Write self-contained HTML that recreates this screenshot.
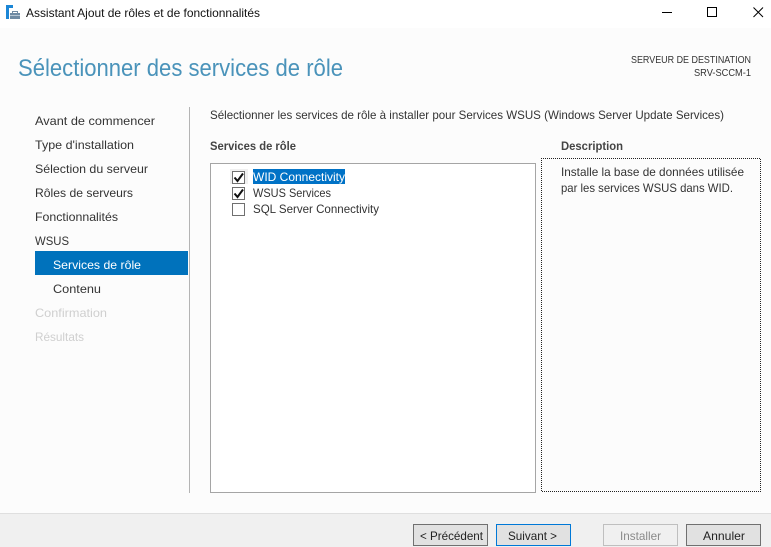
<!DOCTYPE html>
<html lang="fr">
<head>
<meta charset="utf-8">
<title>Assistant Ajout de rôles et de fonctionnalités</title>
<style>
html,body{margin:0;padding:0;width:771px;height:547px;overflow:hidden;background:#fcfcfc}
svg{display:block}
text{font-family:"Liberation Sans",sans-serif;font-size:12px;fill:#333}
</style>
</head>
<body>
<svg width="771" height="547" viewBox="0 0 771 547" xmlns="http://www.w3.org/2000/svg">
<rect width="771" height="547" fill="#fcfcfc"/>
<rect width="771" height="28" fill="#fff"/>
<!-- app icon -->
<rect x="6" y="5" width="7" height="3" fill="#1b86d6"/>
<rect x="6" y="5" width="3" height="14" fill="#1b86d6"/>
<rect x="10" y="13" width="10" height="6" fill="#6f8ba3"/>
<rect x="12.5" y="11.5" width="5" height="2" fill="none" stroke="#6f8ba3"/>
<rect x="10" y="15" width="10" height="1" fill="#b5c5d2"/>
<text x="26" y="17" textLength="234" lengthAdjust="spacingAndGlyphs" style="fill:#111">Assistant Ajout de rôles et de fonctionnalités</text>
<!-- window buttons -->
<rect x="662" y="12" width="10" height="1" fill="#000"/>
<rect x="707.5" y="7.5" width="9" height="9" fill="none" stroke="#000"/>
<path d="M753.5 7.5l9.5 9.5M763 7.5l-9.5 9.5" stroke="#000" fill="none"/>
<!-- heading -->
<text x="18" y="76" textLength="325" lengthAdjust="spacingAndGlyphs" style="font-size:24px;fill:#4a93ba">Sélectionner des services de rôle</text>
<text x="751" y="63" text-anchor="end" textLength="120" lengthAdjust="spacingAndGlyphs" style="font-size:10px;fill:#333">SERVEUR DE DESTINATION</text>
<text x="751" y="76" text-anchor="end" textLength="57" lengthAdjust="spacingAndGlyphs" style="font-size:10px;fill:#333">SRV-SCCM-1</text>
<!-- sidebar -->
<rect x="35" y="251" width="153" height="24" fill="#0072bc"/>
<rect x="189" y="107" width="1" height="386" fill="#b4b4b4"/>
<text x="35" y="125" textLength="120" lengthAdjust="spacingAndGlyphs">Avant de commencer</text>
<text x="35" y="149" textLength="99" lengthAdjust="spacingAndGlyphs">Type d'installation</text>
<text x="35" y="173" textLength="113" lengthAdjust="spacingAndGlyphs">Sélection du serveur</text>
<text x="35" y="197" textLength="98" lengthAdjust="spacingAndGlyphs">Rôles de serveurs</text>
<text x="35" y="221" textLength="83" lengthAdjust="spacingAndGlyphs">Fonctionnalités</text>
<text x="35" y="245" textLength="34" lengthAdjust="spacingAndGlyphs">WSUS</text>
<text x="53" y="269" textLength="88" lengthAdjust="spacingAndGlyphs" style="fill:#fff">Services de rôle</text>
<text x="53" y="293" textLength="48" lengthAdjust="spacingAndGlyphs">Contenu</text>
<text x="35" y="317" textLength="72" lengthAdjust="spacingAndGlyphs" style="fill:#cfcfcf">Confirmation</text>
<text x="35" y="341" textLength="49" lengthAdjust="spacingAndGlyphs" style="fill:#cfcfcf">Résultats</text>
<!-- main -->
<text x="210" y="119" textLength="514" lengthAdjust="spacingAndGlyphs">Sélectionner les services de rôle à installer pour Services WSUS (Windows Server Update Services)</text>
<text x="210" y="150" textLength="86" lengthAdjust="spacingAndGlyphs" style="font-weight:bold;fill:#444">Services de rôle</text>
<text x="561" y="150" textLength="62" lengthAdjust="spacingAndGlyphs" style="font-weight:bold;fill:#444">Description</text>
<!-- list -->
<rect x="210.5" y="163.5" width="325" height="329" fill="#fff" stroke="#a5a5a5"/>
<rect x="230" y="169" width="18" height="15" fill="#f0f0f0"/>
<rect x="253" y="169" width="92" height="15" fill="#0072c6"/>
<rect x="232.5" y="171.5" width="12" height="12" fill="#fff" stroke="#707070"/>
<rect x="232.5" y="187.5" width="12" height="12" fill="#fff" stroke="#707070"/>
<rect x="232.5" y="203.5" width="12" height="12" fill="#fff" stroke="#707070"/>
<path d="M234.5 177.5l3 3.5 5.5-7.5" fill="none" stroke="#111" stroke-width="2"/>
<path d="M234.5 193.5l3 3.5 5.5-7.5" fill="none" stroke="#111" stroke-width="2"/>
<text x="253" y="181" textLength="92" lengthAdjust="spacingAndGlyphs" style="fill:#fff">WID Connectivity</text>
<text x="253" y="197" textLength="78" lengthAdjust="spacingAndGlyphs">WSUS Services</text>
<text x="253" y="213" textLength="126" lengthAdjust="spacingAndGlyphs">SQL Server Connectivity</text>
<!-- description -->
<rect x="541.5" y="158.5" width="219" height="333" fill="#fcfcfc" stroke="#222" stroke-dasharray="1 1" stroke-dashoffset="0.5"/>
<text x="561" y="176" textLength="183" lengthAdjust="spacingAndGlyphs">Installe la base de données utilisée</text>
<text x="561" y="192" textLength="172" lengthAdjust="spacingAndGlyphs">par les services WSUS dans WID.</text>
<!-- footer -->
<rect x="0" y="513" width="771" height="34" fill="#f0f0f0"/>
<rect x="0" y="513" width="771" height="1" fill="#dfdfdf"/>
<rect x="413.5" y="524.5" width="74" height="21" fill="#e1e1e1" stroke="#707070"/>
<rect x="496.5" y="524.5" width="74" height="21" fill="#e1e1e1" stroke="#0078d7"/>
<rect x="603.5" y="524.5" width="74" height="21" fill="#f0f0f0" stroke="#bfbfbf"/>
<rect x="686.5" y="524.5" width="74" height="21" fill="#e1e1e1" stroke="#707070"/>
<text x="420" y="540" textLength="63" lengthAdjust="spacingAndGlyphs" style="fill:#222">&lt; Précédent</text>
<text x="508" y="540" textLength="49" lengthAdjust="spacingAndGlyphs" style="fill:#222">Suivant &gt;</text>
<text x="620" y="540" textLength="41" lengthAdjust="spacingAndGlyphs" style="fill:#8a8a8a">Installer</text>
<text x="703" y="540" textLength="42" lengthAdjust="spacingAndGlyphs" style="fill:#222">Annuler</text>
</svg>
</body>
</html>
